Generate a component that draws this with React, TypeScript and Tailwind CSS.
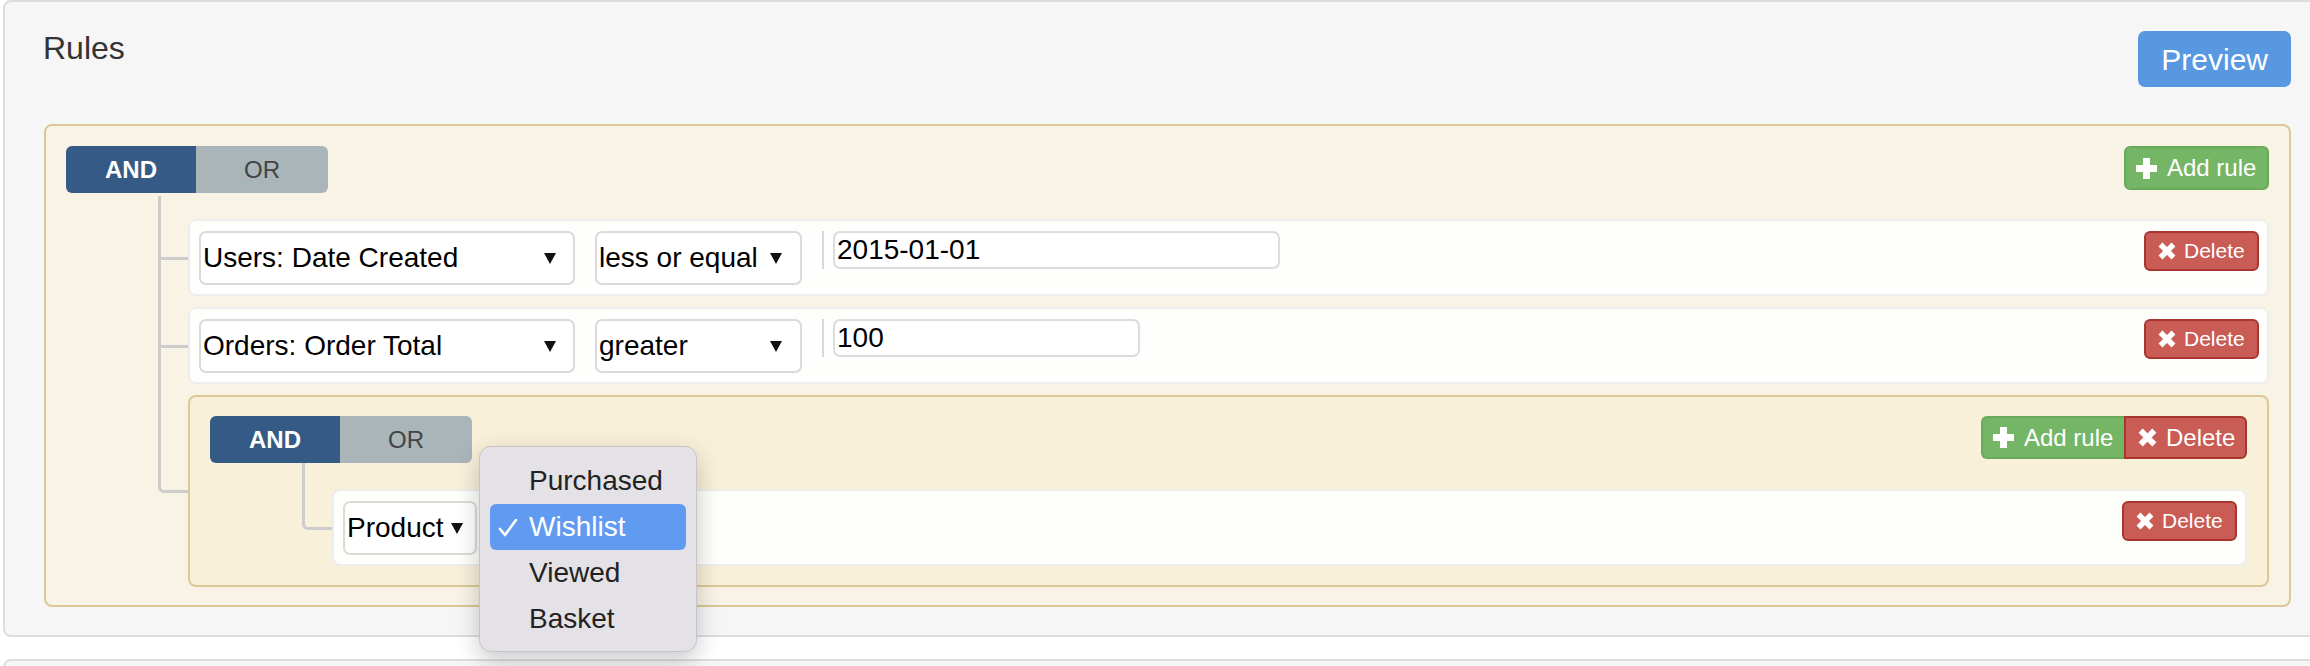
import React from 'react'
import clsx from 'clsx'

function PlusIcon() {
  return (
    <svg width="21" height="21" viewBox="0 0 21 21" className="shrink-0">
      <path d="M7 0h7v7h7v7h-7v7H7v-7H0V7h7z" fill="currentColor" />
    </svg>
  )
}

function RemoveIcon({ size = 18 }: { size?: number }) {
  return (
    <svg width={size} height={size} viewBox="0 0 18 18" className="shrink-0">
      <path d="M2.5 2.5L15.5 15.5M15.5 2.5L2.5 15.5" stroke="currentColor" strokeWidth="5.5" />
    </svg>
  )
}

function Caret() {
  return (
    <svg width="12" height="11" viewBox="0 0 12 11" className="shrink-0">
      <path d="M0 0h12L6 11z" fill="#111" />
    </svg>
  )
}

function FakeSelect({ label, className }: { label: string; className: string }) {
  return (
    <div className={clsx('flex h-[54px] items-center justify-between rounded-[7px] border-2 border-[#dadada] bg-white pl-[2px] text-[28px] leading-[50px] text-black', className)}>
      <span className="whitespace-nowrap">{label}</span>
      <Caret />
    </div>
  )
}

function ValueInput({ value, className }: { value: string; className: string }) {
  return (
    <div className="flex items-start">
      <div className="ml-[20px] mr-[9px] h-[38px] w-[2px] bg-[#d8d8d8]" />
      <div className={clsx('h-[38px] rounded-[7px] border-2 border-[#dcdcdc] bg-white pl-[2px] text-[28px] leading-[34px] text-black', className)}>
        {value}
      </div>
    </div>
  )
}

function DeleteBtn() {
  return (
    <button className="flex h-[40px] w-[115px] items-center gap-[8px] rounded-[6px] border-2 border-[#a8352e] bg-[#c95c55] pl-[12px] text-[21px] text-white">
      <RemoveIcon size={18} />
      Delete
    </button>
  )
}

function AndOr() {
  return (
    <div className="flex h-[47px] overflow-hidden rounded-[6px] text-[24px]">
      <div className="flex w-[130px] items-center justify-center bg-[#355a86] font-bold text-white">AND</div>
      <div className="flex w-[132px] items-center justify-center bg-[#a9b5b9] text-[#444]">OR</div>
    </div>
  )
}

// tree connector lines, like the query builder's ::before / ::after
function Branch({ first, last, top, children }: { first?: boolean; last?: boolean; top?: string; children: React.ReactNode }) {
  return (
    <div className="relative">
      <span
        className={clsx(
          'absolute left-[-30px] bottom-[calc(50%-2px)] w-[30px] border-b-[3px] border-l-[3px] border-[#cccccc]',
          first ? top : 'top-[-12px]',
          last && 'rounded-bl-[6px]'
        )}
      />
      {!last && <span className="absolute left-[-30px] top-[calc(50%-2px)] bottom-[-12px] border-l-[3px] border-[#cccccc]" />}
      {children}
    </div>
  )
}

function RuleRow({ children }: { children: React.ReactNode }) {
  return (
    <div className="flex h-[77px] items-start justify-between rounded-[8px] border-2 border-[#ededed] bg-white/90 pl-[9px] pr-[8px] pt-[10px]">
      {children}
    </div>
  )
}

function Popup() {
  const items = ['Purchased', 'Wishlist', 'Viewed', 'Basket']
  return (
    <div className="absolute left-[136px] top-[-55px] z-10 h-[206px] w-[218px] rounded-[12px] border border-[#c6c4c9] bg-[#e4e2e7] px-[10px] pt-[11px] shadow-[0_8px_24px_rgba(0,0,0,0.22)] font-['Liberation_Sans',sans-serif]">
      {items.map((it) => (
        <div
          key={it}
          className={clsx(
            'relative h-[46px] rounded-[6px] pl-[39px] text-[28px] leading-[46px]',
            it === 'Wishlist' ? 'bg-[#619bf1] text-white' : 'text-[#222]'
          )}
        >
          {it === 'Wishlist' && (
            <svg width="20" height="20" viewBox="0 0 20 20" className="absolute left-[8px] top-[14px]">
              <path d="M2 11l5 6L18 2" fill="none" stroke="white" strokeWidth="2.6" strokeLinecap="round" strokeLinejoin="round" />
            </svg>
          )}
          {it}
        </div>
      ))}
    </div>
  )
}

export default function App() {
  return (
    <div className="relative h-[666px] w-[2310px] overflow-hidden bg-white font-['Liberation_Sans',Arial,sans-serif]">
      {/* Rules panel */}
      <div className="ml-[3px] w-[2329px] rounded-[8px] border-2 border-[#dddddd] bg-[#f6f6f6] px-[39px] pb-[28px] pt-[27px]">
        <div className="flex items-start justify-between">
          <h2 className="ml-[-1px] text-[32px] leading-[38px] text-[#333]">Rules</h2>
          <button className="mt-[2px] h-[56px] rounded-[7px] bg-[#5898e0] px-[23px] text-[30px] text-white">Preview</button>
        </div>

        {/* root group */}
        <div className="mt-[37px] rounded-[8px] border-2 border-[#dcc896] bg-[#f8f3e4] px-[20px] pb-[18px] pt-[20px]">
          <div className="flex items-start justify-between">
            <AndOr />
            <button className="flex h-[44px] w-[145px] items-center gap-[10px] rounded-[6px] border-2 border-[#69a95b] bg-[#74b566] pl-[10px] text-[24px] text-white">
              <PlusIcon />
              Add rule
            </button>
          </div>

          <div className="ml-[122px] mt-[26px] flex flex-col gap-[11px]">
            <Branch first top="top-[-23px]">
              <RuleRow>
                <div className="flex items-start">
                  <FakeSelect label="Users: Date Created" className="w-[376px] pr-[17px]" />
                  <FakeSelect label="less or equal" className="ml-[20px] w-[207px] pr-[18px]" />
                  <ValueInput value="2015-01-01" className="w-[447px]" />
                </div>
                <DeleteBtn />
              </RuleRow>
            </Branch>

            <Branch>
              <RuleRow>
                <div className="flex items-start">
                  <FakeSelect label="Orders: Order Total" className="w-[376px] pr-[17px]" />
                  <FakeSelect label="greater" className="ml-[20px] w-[207px] pr-[18px]" />
                  <ValueInput value="100" className="w-[307px]" />
                </div>
                <DeleteBtn />
              </RuleRow>
            </Branch>

            <Branch last>
              {/* nested group */}
              <div className="rounded-[8px] border-2 border-[#dcc896] bg-[#f9f0da] px-[20px] pb-[19px] pt-[19px]">
                <div className="flex items-start justify-between">
                  <AndOr />
                  <div className="flex h-[43px] text-[24px] text-white">
                    <button className="flex w-[143px] items-center gap-[10px] rounded-l-[6px] border-2 border-r-0 border-[#69a95b] bg-[#74b566] pl-[10px]">
                      <PlusIcon />
                      Add rule
                    </button>
                    <button className="flex w-[123px] items-center gap-[9px] rounded-r-[6px] border-2 border-[#a8352e] bg-[#c95c55] pl-[12px]">
                      <RemoveIcon size={19} />
                      Delete
                    </button>
                  </div>
                </div>

                <div className="ml-[122px] mt-[26px] flex flex-col">
                  <Branch first last top="top-[-26px]">
                    <RuleRow>
                      <div className="relative flex items-start">
                        <FakeSelect label="Product" className="w-[134px] gap-[2px] pr-[12px]" />
                        <Popup />
                      </div>
                      <DeleteBtn />
                    </RuleRow>
                  </Branch>
                </div>
              </div>
            </Branch>
          </div>
        </div>
      </div>

      {/* next panel, cut off */}
      <div className="ml-[3px] mt-[22px] h-[40px] w-[2329px] rounded-[8px] border-2 border-[#dddddd] bg-[#f6f6f6]" />
    </div>
  )
}
